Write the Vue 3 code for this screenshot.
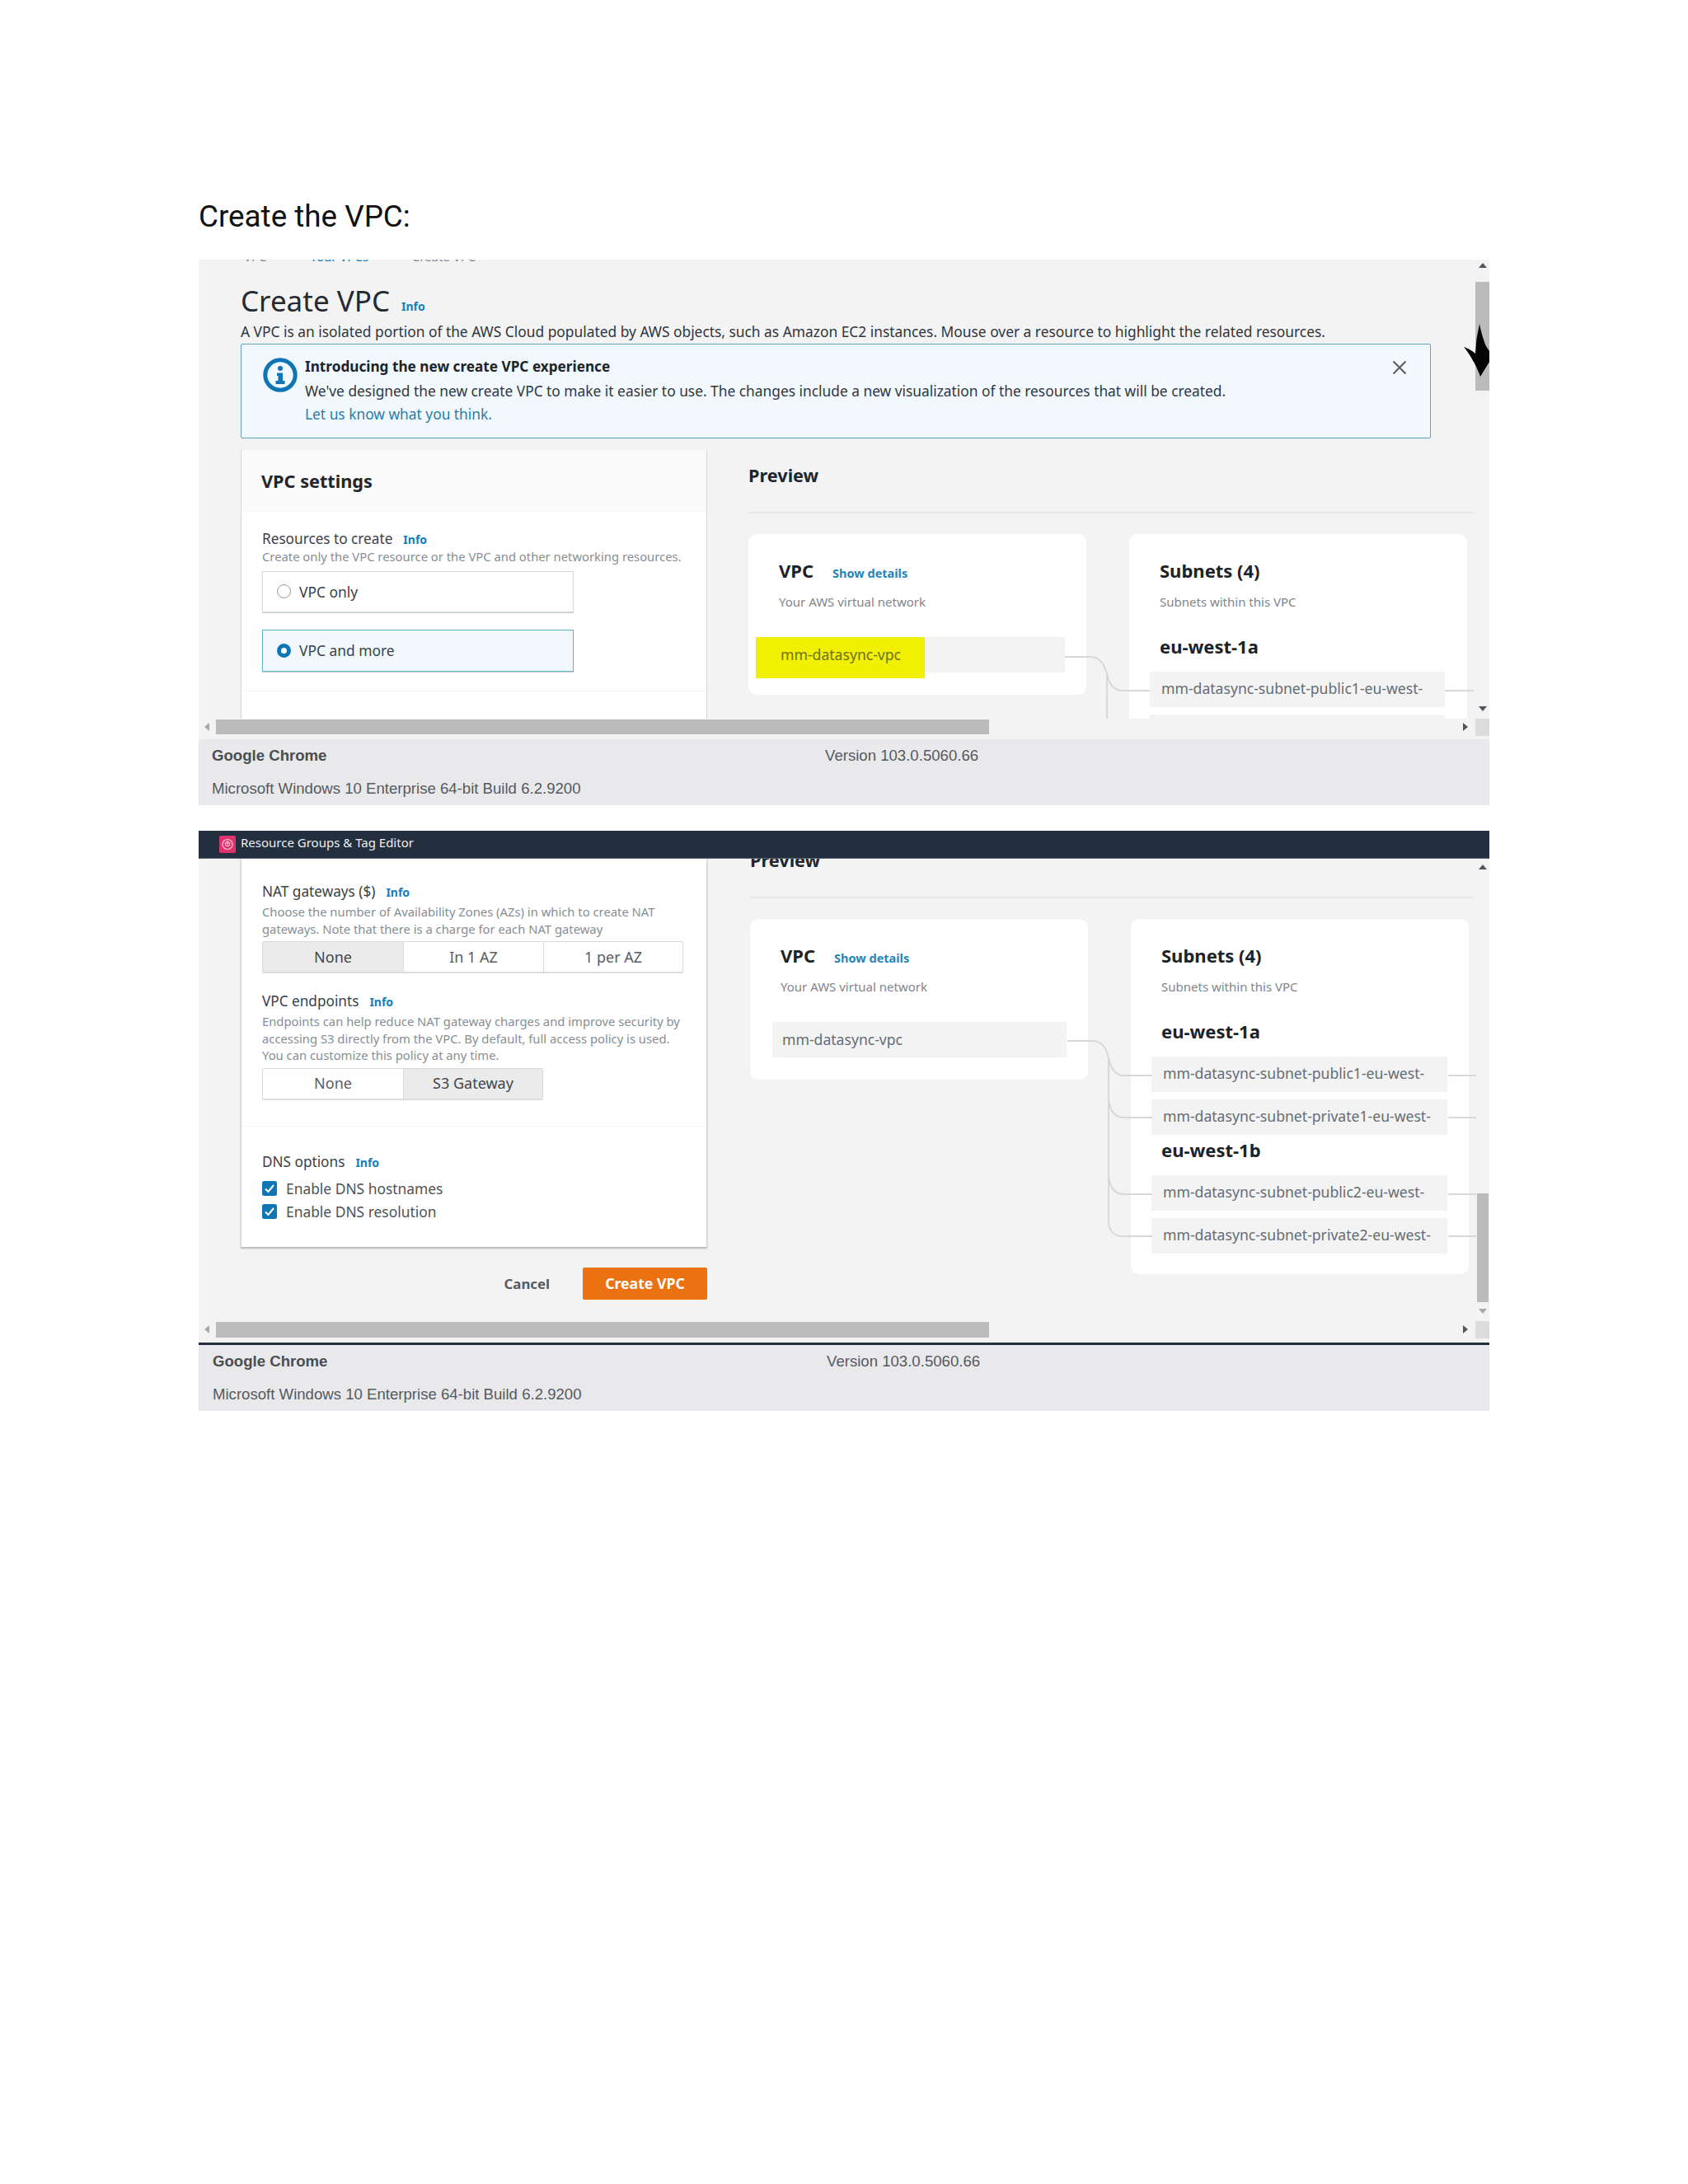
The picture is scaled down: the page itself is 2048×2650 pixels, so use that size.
<template>
  <div class="page">
    <h1 class="doc-title">Create the VPC:</h1>

    <section class="shot">
      <div class="viewport first">
        <div class="scroll-area">
          <div class="content">
            <div class="crumbs">
              <span>VPC</span><i>&gt;</i><span class="crumb-link">Your VPCs</span><i>&gt;</i><span>Create VPC</span>
            </div>
            <div class="title-row">
              <h2>Create VPC</h2>
              <a class="info title-info">Info</a>
            </div>
            <p class="page-desc">A VPC is an isolated portion of the AWS Cloud populated by AWS objects, such as Amazon EC2 instances. Mouse over a resource to highlight the related resources.</p>

            <div class="alert">
              <svg class="alert-icon" viewBox="0 0 42 42" aria-hidden="true">
                <circle cx="21" cy="21" r="18.2" fill="none" stroke="#0f75b5" stroke-width="5" />
                <circle cx="21" cy="13" r="3" fill="#0f75b5" />
                <path d="M17 18.500h7v9.500h2.500v4h-11v-4h3v-6h-1.500z" fill="#0f75b5" />
              </svg>
              <div class="alert-text">
                <strong>Introducing the new create VPC experience</strong>
                <span>We've designed the new create VPC to make it easier to use. The changes include a new visualization of the resources that will be created.</span>
                <a>Let us know what you think.</a>
              </div>
              <svg class="alert-close" viewBox="0 0 18 18" aria-hidden="true">
                <path d="M1.500 1.500l15 15M16.500 1.500l-15 15" stroke="#545b64" stroke-width="2" fill="none" />
              </svg>
            </div>

            <div class="columns">
              <div class="panel">
                <div class="panel-head">VPC settings</div>
                <div class="panel-body">
                  <div class="field-label">Resources to create <a class="info">Info</a></div>
                  <p class="hint">Create only the VPC resource or the VPC and other networking resources.</p>
                  <div class="radio-card">
                    <span class="radio"></span>VPC only
                  </div>
                  <div class="radio-card selected">
                    <span class="radio on"></span>VPC and more
                  </div>
                  <div class="panel-sep"></div>
                </div>
              </div>

              <div class="preview">
                <div class="preview-head">Preview</div>
                <div class="cards">
                  <div class="card vpc-card">
                    <div class="card-title">VPC <a>Show details</a></div>
                    <p class="card-sub">Your AWS virtual network</p>
                    <div class="item vpc-item">
                      <span class="marker"></span>
                      <span class="marked">mm-datasync-vpc</span>
                    </div>
                  </div>
                  <div class="card subnet-card">
                    <div class="card-title">Subnets (4)</div>
                    <p class="card-sub">Subnets within this VPC</p>
                    <template v-for="zone in zones" :key="zone.name">
                      <h3 class="zone">{{ zone.name }}</h3>
                      <div v-for="subnet in zone.subnets" :key="subnet" class="item subnet">{{ subnet }}</div>
                    </template>
                  </div>
                </div>
              </div>
            </div>
          </div>

          <svg class="links" viewBox="241 315 1566 557" aria-hidden="true">
            <path d="M1292 797H1322C1334 797 1340 805 1343 818V872M1343 818C1346 832 1352 838 1362 838H1395M1753 838H1788" />
          </svg>
        </div>

        <div class="hbar">
          <span class="tri left"></span>
          <span class="hthumb"></span>
          <span class="tri right"></span>
          <span class="corner"></span>
        </div>

        <div class="vbar">
          <span class="tri up"></span>
          <span class="vthumb"></span>
          <span class="tri down"></span>
        </div>

        <!-- hand drawn arrow from the doc, sits on the scrollbar -->
        <svg class="big-arrow" viewBox="0 0 31 64" aria-hidden="true">
          <path d="M19 0C21 10 24 20 27 27L31 33V46L20 64C16 52 8 38 0 28C6 30 11 33 14 36L15.500 18Z" />
        </svg>
      </div>
      <div class="about">
        <b>Google Chrome</b><span>Version 103.0.5060.66</span>
        <span class="os">Microsoft Windows 10 Enterprise 64-bit Build 6.2.9200</span>
      </div>
    </section>

    <section class="shot second">
      <header class="console-nav">
        <svg class="nav-logo" viewBox="0 0 20 21" aria-hidden="true">
          <rect width="20" height="21" rx="2" fill="#e0326f" />
          <circle cx="10" cy="10.500" r="6" fill="none" stroke="#f6c3d6" stroke-width="1.200" />
          <path d="M10 6.500l3 2.500-1 3.500h-4l-1-3.500zM10 6.500v6M7 9l6 0" fill="none" stroke="#f6c3d6" stroke-width="1" />
        </svg>
        <span>Resource Groups &amp; Tag Editor</span>
      </header>
      <div class="viewport">
        <div class="scroll-area">
          <div class="content">
            <div class="columns">
              <div>
                <div class="panel form-panel">
                  <div class="panel-body">
                    <div class="field-label">NAT gateways ($) <a class="info">Info</a></div>
                    <p class="hint">Choose the number of Availability Zones (AZs) in which to create NAT<br />gateways. Note that there is a charge for each NAT gateway</p>
                    <div class="segments">
                      <span class="active">None</span><span>In 1 AZ</span><span>1 per AZ</span>
                    </div>

                    <div class="field-label spaced">VPC endpoints <a class="info">Info</a></div>
                    <p class="hint">Endpoints can help reduce NAT gateway charges and improve security by<br />accessing S3 directly from the VPC. By default, full access policy is used.<br />You can customize this policy at any time.</p>
                    <div class="segments two">
                      <span>None</span><span class="active">S3 Gateway</span>
                    </div>
                  </div>
                  <div class="panel-body dns">
                    <div class="field-label">DNS options <a class="info">Info</a></div>
                    <div v-for="opt in dnsOptions" :key="opt" class="check-row">
                      <svg viewBox="0 0 18 18" aria-hidden="true">
                        <rect width="18" height="18" rx="2.500" fill="#0f75b5" />
                        <path d="M4 9.500l3.500 3.500 6.500-8" fill="none" stroke="#fff" stroke-width="2" />
                      </svg>
                      {{ opt }}
                    </div>
                  </div>
                </div>
                <div class="actions">
                  <span class="cancel">Cancel</span>
                  <span class="create">Create VPC</span>
                </div>
              </div>

              <div class="preview scrolled">
                <div class="preview-head">Preview</div>
                <div class="cards">
                  <div class="card vpc-card">
                    <div class="card-title">VPC <a>Show details</a></div>
                    <p class="card-sub">Your AWS virtual network</p>
                    <div class="item vpc-item">mm-datasync-vpc</div>
                  </div>
                  <div class="card subnet-card">
                    <div class="card-title">Subnets (4)</div>
                    <p class="card-sub">Subnets within this VPC</p>
                    <template v-for="zone in zones" :key="zone.name">
                      <h3 class="zone">{{ zone.name }}</h3>
                      <div v-for="subnet in zone.subnets" :key="subnet" class="item subnet">{{ subnet }}</div>
                    </template>
                  </div>
                </div>
              </div>
            </div>
          </div>

          <svg class="links" viewBox="241 1042 1566 561" aria-hidden="true">
            <path d="M1295 1263H1325C1337 1263 1342 1271 1345 1284V1484C1346 1494 1352 1500 1362 1500H1398M1345 1284C1348 1298 1354 1305 1364 1305H1398M1345 1335C1347 1349 1354 1356 1364 1356H1398M1345 1428C1347 1442 1354 1449 1364 1449H1398M1757 1305H1791M1757 1356H1791M1757 1449H1791M1757 1500H1791" />
          </svg>
        </div>

        <div class="hbar">
          <span class="tri left"></span>
          <span class="hthumb"></span>
          <span class="tri right"></span>
          <span class="corner"></span>
        </div>

        <div class="vbar low">
          <span class="tri up"></span>
          <span class="vthumb"></span>
          <span class="tri down"></span>
        </div>
      </div>
      <div class="about">
        <b>Google Chrome</b><span>Version 103.0.5060.66</span>
        <span class="os">Microsoft Windows 10 Enterprise 64-bit Build 6.2.9200</span>
      </div>
    </section>
  </div>
</template>

<script setup>
const zones = [
  { name: 'eu-west-1a', subnets: ['mm-datasync-subnet-public1-eu-west-', 'mm-datasync-subnet-private1-eu-west-'] },
  { name: 'eu-west-1b', subnets: ['mm-datasync-subnet-public2-eu-west-', 'mm-datasync-subnet-private2-eu-west-'] }
]

const dnsOptions = ['Enable DNS hostnames', 'Enable DNS resolution']
</script>

<style>
html, body { background: #fefefe; }
</style>

<style scoped>
.page {
  width: 2048px;
  height: 2650px;
  box-sizing: border-box;
  padding: 241px 241px 0;
  overflow: hidden;
  background: #fefefe;
  color: #16191f;
  font-family: "Noto Sans", "Open Sans", Arial, sans-serif;
}

.doc-title { margin: 0 0 30px; font-family: Roboto, Arial, sans-serif; font-size: 36.800px; font-weight: 400; line-height: 44px; color: #111; }

.shot { width: 1566px; margin-bottom: 31px; }
.viewport { position: relative; background: #f3f3f4; }
.scroll-area { position: relative; height: 557px; overflow: hidden; }
.second .scroll-area { height: 561px; }
.content { padding-left: 51px; }

.crumbs { display: flex; gap: 22px; height: 20px; margin-top: -14px; padding-left: 4px; color: #7d8690; font-size: 15px; line-height: 20px; }
.crumbs i { font-style: normal; }
.crumb-link { color: #0f75b5; }

.title-row { display: flex; align-items: flex-end; gap: 14px; height: 44px; margin-top: 22px; }
.title-row h2 { margin: 0; font-size: 35px; font-weight: 400; line-height: 44px; color: #232a31; }
.info { color: #1380bd; font-size: 14px; font-weight: 700; }
.title-info { padding-bottom: 6px; }
.page-desc { margin: 3px 0; font-size: 17.360px; line-height: 24px; color: #2f363d; white-space: nowrap; }

.alert { display: flex; width: 1444px; height: 115px; box-sizing: border-box; padding: 13px 28px 0 26px; border: 1px solid #5fa5bf; border-radius: 2px; background: #f1f9fe; }
.alert-icon { width: 42px; height: 42px; margin: 3px 9px 0 0; flex: none; }
.alert-text { display: flex; flex-direction: column; font-size: 17.350px; line-height: 28.500px; color: #30373e; white-space: nowrap; }
.alert-text strong { font-size: 17.200px; font-weight: 700; color: #1d242b; }
.alert-text a { color: #2a7ca8; }
.alert-close { width: 18px; height: 18px; margin: 6px 0 0 auto; }

.columns { display: grid; grid-template-columns: 566px 879px; column-gap: 50px; margin-top: 14px; }
.second .columns { margin-top: 0; column-gap: 52px; }

.panel { border: solid #d5d8da; border-width: 0 1px; background: #fff; }
.panel-head { display: flex; align-items: center; height: 74px; padding: 0 0 2px 24px; background: #fafafa; font-size: 21.700px; font-weight: 700; color: #1f262d; }
.panel-body { padding: 21px 25px 0; }
.field-label { display: flex; align-items: baseline; height: 22px; font-size: 17.200px; line-height: 22px; color: #3a4148; }
.field-label .info { margin-left: 13px; }
.field-label.spaced { margin-top: 24px; }
.hint { margin: 0; font-size: 14.800px; line-height: 20.500px; color: #878e95; white-space: nowrap; }
.radio-card { display: flex; align-items: center; width: 378px; height: 50px; box-sizing: border-box; margin-top: 7px; padding-left: 17px; gap: 10px; border: 1px solid #d5dbdb; box-shadow: 0 1px 1px rgba(0, 28, 36, .2); background: #fff; font-size: 17.400px; color: #3a4148; }
.radio-card.selected { height: 51px; margin-top: 21px; border-color: #5fb3c4; background: #f1f9fe; }
.radio { width: 17px; height: 17px; box-sizing: border-box; border: 1px solid #8f969c; border-radius: 50%; background: #fff; }
.radio.on { border: 5px solid #0f75b5; }
.panel-sep { height: 1px; margin: 23px -25px 0; background: #f6f6f6; }

.preview-head { height: 28px; padding: 17px 0 30px; border-bottom: 2px solid #e8e9ea; font-size: 21.700px; font-weight: 700; line-height: 28px; color: #1f262d; }
.scrolled { margin-top: -29px; }
.cards { display: flex; gap: 52px; margin-top: 25px; }
.card { width: 410px; box-sizing: border-box; padding: 29px 0 27px 37px; border-radius: 10px; background: #fff; align-self: flex-start; }
.subnet-card { padding-bottom: 17px; }
.card-title { display: flex; align-items: baseline; height: 30px; font-size: 22px; font-weight: 700; line-height: 30px; color: #1b2229; }
.card-title a { margin-left: 23px; color: #1f85bb; font-size: 14.500px; }
.card-sub { margin: 13px 0 0; font-size: 15px; line-height: 20px; color: #7f868d; }
.item { position: relative; box-sizing: border-box; height: 43px; background: #f3f3f4; font-size: 17.600px; line-height: 41px; color: #656c73; white-space: nowrap; }
.vpc-item { width: 357px; margin: 33px 0 0 -10px; padding-left: 12px; line-height: 43px; }
.marker { position: absolute; left: -18px; top: 0; width: 205px; height: 50px; background: #f0f000; }
.marked { position: relative; color: #6f7020; }
.zone { margin: 29px 0 16px; font-size: 22px; font-weight: 700; line-height: 30px; color: #1b2229; }
.zone ~ .zone { margin: -5px 0 16px; }
.subnet { width: 358px; margin: 0 0 8.500px -12px; padding-left: 14px; }
.second .item.subnet { width: 359px; }

.links { position: absolute; inset: 0; width: 100%; height: 100%; pointer-events: none; }
.links path { fill: none; stroke: #d5d9db; stroke-width: 2; }

.form-panel { border-bottom: 1px solid #b4b8bb; box-shadow: 0 1px 2px rgba(0, 28, 36, .25); }
.form-panel .panel-body { padding: 29px 25px 32px; }
.form-panel .hint { margin-top: 3px; }
.form-panel .panel-body.dns { padding: 32px 25px 29px; border-top: 1px solid #f4f4f4; }
.segments { display: grid; grid-template-columns: 170px 170px 169px; width: 511px; height: 38px; box-sizing: border-box; margin-top: 5px; border: 1px solid #d5dbdb; border-radius: 2px; box-shadow: 0 1px 1px rgba(0, 28, 36, .15); font-size: 18px; color: #565d64; }
.segments.two { grid-template-columns: 170px 169px; width: 341px; }
.segments span { display: grid; place-items: center; border-left: 1px solid #d5dbdb; padding-bottom: 1px; }
.segments span:first-child { border-left: 0; }
.segments .active { background: #ebebec; color: #3f464d; }
.check-row { display: flex; align-items: center; gap: 11px; height: 28px; font-size: 17.400px; color: #4c5359; }
.check-row svg { width: 18px; height: 18px; flex: none; }
.dns .field-label + .check-row { margin-top: 7px; }
.actions { display: flex; align-items: center; justify-content: flex-end; gap: 40px; margin-top: 24px; }
.cancel { font-size: 16.800px; font-weight: 700; color: #545b62; }
.create { display: grid; place-items: center; width: 151px; height: 39px; border-radius: 2px; background: #ec7211; color: #fff; font-size: 17.700px; font-weight: 700; }

.hbar { display: flex; align-items: flex-start; height: 24px; padding: 1px 0 0 7px; }
.second .hbar { height: 25px; }
.hthumb { width: 938px; height: 18px; margin-left: 8px; background: #bbbbbc; }
.second .hthumb { height: 19px; }
.tri { width: 0; height: 0; flex: none; border-style: solid; border-color: transparent; }
.tri.left { margin-top: 4px; border-width: 5px 6px 5px 0; border-right-color: #a5a7a9; }
.tri.right { margin: 4px 0 0 575px; border-width: 5px 0 5px 6px; border-left-color: #50565c; }
.corner { width: 17px; height: 21px; margin: -1px 0 0 9px; background: #dcdcdd; }
.tri.up { border-width: 0 5px 6px; border-bottom-color: #50565c; }
.tri.down { border-width: 6px 5px 0; border-top-color: #50565c; }

.vbar { position: absolute; top: 4px; right: 0; display: flex; flex-direction: column; align-items: center; width: 17px; height: 544px; }
.vthumb { width: 17px; height: 132px; margin-top: 17px; background: #bbbbbc; }
.vbar .down { margin-top: auto; }
.vbar.low { top: 7px; height: 545px; width: 14px; right: 1px; }
.vbar.low .vthumb { width: 14px; margin-top: 393px; }
.vbar.low .up { border-bottom-color: #50565c; }
.vbar.low .down { border-top-color: #a5a7a9; }

.big-arrow { position: absolute; left: 1535px; top: 78px; width: 31px; height: 64px; }
.big-arrow path { fill: #050505; }

.console-nav { display: flex; align-items: center; gap: 6px; height: 34px; padding-left: 25px; background: #232f3e; color: #eceef0; font-size: 15px; border-bottom: 1px solid #5b6672; box-sizing: border-box; }
.console-nav span { margin-bottom: 5px; }
.nav-logo { width: 20px; height: 21px; }
.second .about { height: 83px; margin-top: 0; border-top: 3px solid #232f3e; padding-left: 17px; }
.second .about span:nth-child(2) { margin-left: 1px; }

.about { display: grid; grid-template-columns: 744px 1fr; height: 80px; box-sizing: border-box; padding-left: 16px; background: #e9e9eb; font-family: "Liberation Sans", Arial, sans-serif; font-size: 18.600px; line-height: 39px; color: #555a5f; }
.about b { color: #4a4e52; }
.os { grid-column: 1 / 3; }
</style>
